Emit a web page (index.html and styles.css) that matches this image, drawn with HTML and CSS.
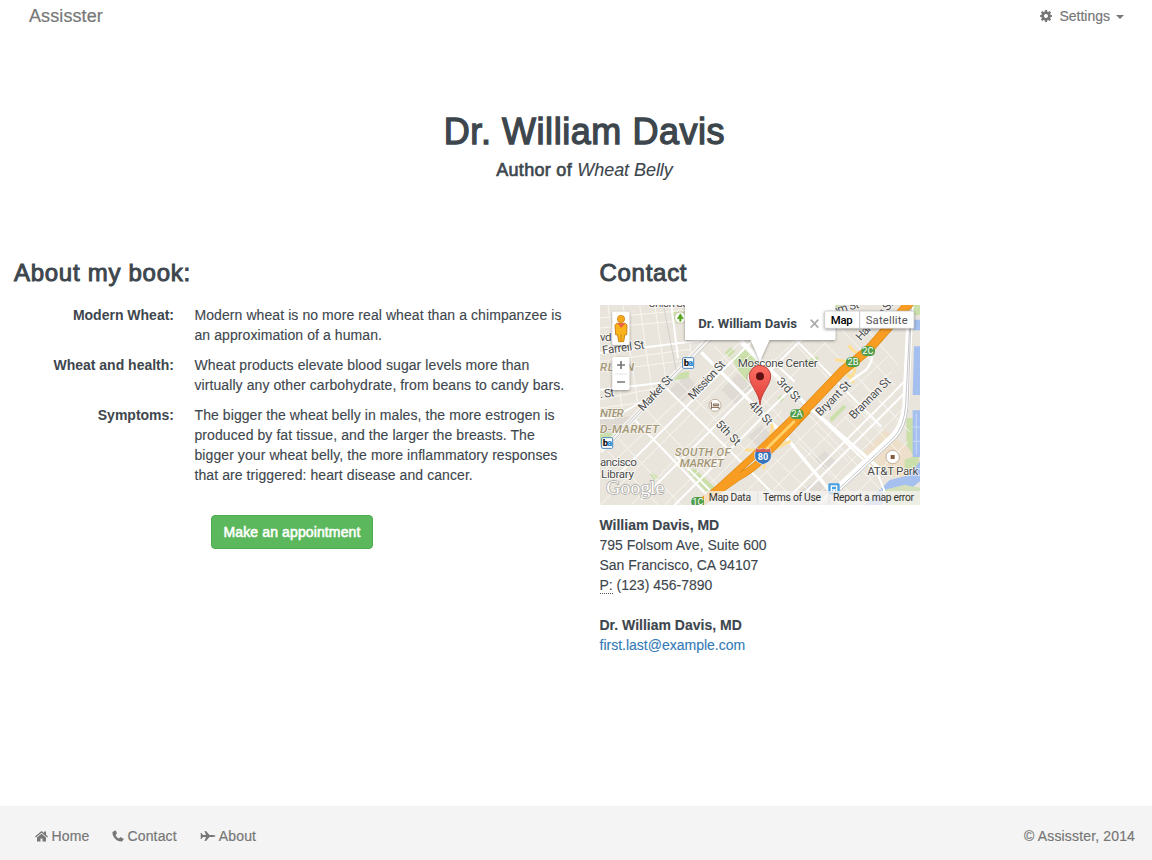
FILE: index.html
```html
<!DOCTYPE html>
<html lang="en">
<head>
<meta charset="utf-8">
<title>Assisster</title>
<link rel="stylesheet" href="styles.css">
</head>
<body>
<nav class="navbar">
  <a class="brand">Assisster</a>
  <a class="settings">
    <svg class="gear" viewBox="0 0 24 24"><path fill-rule="evenodd" d="M10 0h4l.6 3.300 1.900.8 2.800-1.900 2.800 2.800-1.900 2.800.8 1.900 3 .600v3.400l-3 .600-.8 1.900 1.900 2.800-2.800 2.800-2.800-1.900-1.900.8L14 24h-4l-.6-3.300-1.900-.8-2.800 1.900L1.900 19l1.900-2.800L3 14.300 0 13.700v-3.400l3-.6.8-1.900L1.900 5l2.800-2.800 2.800 1.900 1.900-.8zM12 8a4 4 0 1 0 0 8 4 4 0 0 0 0-8z"/></svg>
    <span>Settings</span><i class="caret"></i>
  </a>
</nav>
<header class="hero">
  <h1>Dr. William Davis</h1>
  <p class="subtitle">Author of <em>Wheat Belly</em></p>
</header>
<main class="columns">
  <section class="book">
    <h2>About my book:</h2>
    <dl class="facts">
      <dt>Modern Wheat:</dt>
      <dd>Modern wheat is no more real wheat than a chimpanzee is<br>an approximation of a human.</dd>
      <dt>Wheat and health:</dt>
      <dd>Wheat products elevate blood sugar levels more than<br>virtually any other carbohydrate, from beans to candy bars.</dd>
      <dt>Symptoms:</dt>
      <dd>The bigger the wheat belly in males, the more estrogen is<br>produced by fat tissue, and the larger the breasts. The<br>bigger your wheat belly, the more inflammatory responses<br>that are triggered: heart disease and cancer.</dd>
    </dl>
    <button class="appointment">Make an appointment</button>
  </section>
  <section class="contact">
    <h2>Contact</h2>
    <svg class="map" viewBox="6 6 960 600">
      <defs>
        <filter id="shade" x="-20%" y="-20%" width="140%" height="150%"><feDropShadow dx="0" dy="3" stdDeviation="4" flood-opacity=".4"/></filter>
        <linearGradient id="pin" x1="0" y1="0" x2="0" y2="1"><stop offset="0" stop-color="#fb7064"/><stop offset="1" stop-color="#de3b34"/></linearGradient>
      </defs>
      <rect x="6" y="6" width="960" height="600" fill="#e9e5dc"/>
      <!-- blocks and parks -->
      <path d="M370 260l50-50 45 45-50 50zM210 265l55-50 35 35-50 50zM6 350l90-10-60 70H6zM450 400l40-35 30 30-40 35zM650 470l30-25 35 30-35 30zM610 560l50-30 40 50-30 30h-60z" fill="#dfdad3"/>
      <path d="M790 455l70-75 70 55 40 40v50l-90-5-90-40z" fill="#eddfc9"/>
      <path d="M400 165l40-30 50 50-50 50zM380 150l18-18 14 14-18 16zM538 285l12-8 8 12-10 8zM213 218l60-14v20l-55 10zM270 505l20-8 70 65-20 22zM695 345l42-40 8 8-44 45zM6 390h48l-15 22-33 10zM155 515l16 18 12-10-22-14zM225 25h35v36h-35zM690 6h45l-25 20zM620 170l40-10v18l-30 14zM935 6h31v30h-20zM925 345h20v110l-20-30zM920 470l42-15v45h-42z" fill="#cadfaa"/>
      <path d="M948 130h18v146h-22zM944 322h22v140h-22zM948 50h18v32h-20zM966 475v60l-90 71H800l75-75 60-15z" fill="#a5c0ef"/>
      <path d="M955 330v125M944 372h22M944 415h22" stroke="#c9d9f5" stroke-width="3"/>
      <path d="M860 560l60-15 46 10v51H865z" fill="#d3e0bb"/>
      <!-- minor streets -->
      <g stroke="#f8f6f1" stroke-width="3" fill="none">
        <path d="M6 45l390-35M6 75l330-30M6 175l270-36M6 205l250-32M6 290l170-35M6 315l150-20M30 6l45 330M75 6l45 300M125 6l40 280M170 6l35 230M262 6l20 170M315 6l15 115M360 6l8 80"/>
        <path d="M30 445l150 161M60 406l190 200M145 320l270 286M235 230l370 376M350 130l440 476M395 88l470 490M480 6l430 450M570 6l365 380M660 6l230 240M740 6l160 180"/>
        <path d="M6 515l450-425M6 606l570-570M100 606l230-240 340-330M200 606l410-415 170-170M340 540l210-215M430 580l200-195 240-225M480 606l400-400M630 606l300-305M740 606l190-190M800 250l95 95M760 290l95 95M740 340l90 90M600 420l100 100M650 380l100 95M530 465l110 105M660 6l-55 55"/>
      </g>
      <!-- main streets -->
      <g stroke="#fff" stroke-width="6" fill="none">
        <path d="M6 150l360-45M220 6l20 160M6 260l180-20M6 345l40 0 130-75M105 345l250 261M205 255l355 351M395 75l230 230 213 205 20 50v46M520 170l70 66M490 6l360 365"/>
        <path stroke-width="10" d="M310 148l250 250 170 208M430 120l195 185 235 205"/>
        <path d="M70 506l350-350L575 6M130 590l350-350L700 20M230 606l300-300 50-50M550 606l325-325 60-62M590 600l330-330M380 606l-150-150"/>
      </g>
      <!-- Market Street and its rail track -->
      <path d="M6 445l90-88 245-260 85-91" stroke="#f6f5f2" stroke-width="17" fill="none"/>
      <path d="M16 430l80-78 240-252 85-94M22 438l325-335 90-97" stroke="#c9c9cb" stroke-width="3" fill="none"/>
      <path d="M196 6l38 195M440 25l40-30" stroke="#c4c4c4" stroke-width="2" fill="none"/>
      <path d="M665 606l220-205q32-35 38-95l14-300" stroke="#fff" stroke-width="20" fill="none"/>
      <path d="M670 606l215-200q34-35 38-100l15-300M680 606l215-200q30-34 35-95l10-305" stroke="#c6c6c8" stroke-width="3" fill="none"/>
      <!-- freeway and ramps -->
      <g fill="none" stroke="#ffdf94" stroke-width="9" stroke-linecap="round">
        <path d="M445 441h80l50-25M522 365q5 35-30 65M498 440v55M715 170l55 10M755 130q15 25 40 20M770 195q0 30-22 23M745 207l20 30M540 430l35-14"/>
      </g>
      <path d="M810 145q25 15-5 55l-50 35" fill="none" stroke="#fff" stroke-width="7"/>
      <path d="M300 606l55-45 115-105 130-126M310 600l112-78q60-34 95-80L630 322" fill="none" stroke="#dc8b17" stroke-width="21"/>
      <path d="M300 606l55-45 115-105 130-126M310 600l112-78q60-34 95-80L630 322" fill="none" stroke="#f99d22" stroke-width="17"/>
      <path d="M590 354L735 202 812 140 936 -2" fill="none" stroke="#dc8b17" stroke-width="28"/>
      <path d="M590 354L735 202 812 140 936 -2" fill="none" stroke="#f99d22" stroke-width="24"/>
      <path d="M505 438L590 354" stroke="#ffd369" stroke-width="8"/>
      <!-- highway badges -->
      <g class="exit"><rect x="577" y="319" width="40" height="29" rx="13"/><text x="597" y="343">2A</text><rect x="744" y="163" width="41" height="29" rx="13"/><text x="765" y="187">2B</text><rect x="790" y="130" width="41" height="29" rx="13"/><text x="810" y="154">2C</text><rect x="280" y="582" width="39" height="29" rx="13"/><text x="300" y="606">1C</text></g>
      <path d="M474 436q10 7 21 0 11 7 21 0l4 18q3 22-25 31-28-9-25-31z" fill="#3775bd" stroke="#fff" stroke-width="2"/><path d="M474 436q10 7 21 0 11 7 21 0l2 11h-46z" fill="#d65b55"/>
      <text class="shield" x="495" y="471">80</text>
      <!-- place markers -->
      <circle cx="247" cy="44" r="17" fill="#fff" stroke="#bcae9b" stroke-width="2"/><path d="M247 32l9 15h-7v8h-4v-8h-7z" fill="#57a51d" stroke="#57a51d" stroke-width="2"/>
      <g fill="#fff" stroke="#a58f78" stroke-width="2"><circle cx="351" cy="307" r="18"/><circle cx="884" cy="462" r="20"/><circle cx="464" cy="224" r="17"/></g>
      <path d="M340 297v21M340 313h23v5M346 308h16v-5h-16z" fill="none" stroke="#795d46" stroke-width="3"/><path d="M878 456h12v12h-12z" fill="#805a3d"/>
      <g class="bart"><rect x="254" y="164" width="33" height="32" rx="3"/><text x="257" y="190">b<tspan>a</tspan></text><rect x="11" y="404" width="33" height="32" rx="3"/><text x="14" y="430">b<tspan>a</tspan></text></g>
      <path d="M442 6h34v5h-34z" fill="#3d82c4"/>
      <rect x="691" y="541" width="34" height="34" rx="4" fill="#48a1e4"/><path d="M698 547h20v20h-20z" fill="#fff"/><path d="M702 551h12v8h-12zM702 562h3v3h-3zM711 562h3v3h-3z" fill="#48a1e4"/>
      <!-- labels -->
      <g class="label">
        <text x="151" y="12" textLength="180">Union Square</text>
        <text x="6" y="115" textLength="35">vd</text>
        <text transform="translate(14 154) rotate(-8)" textLength="128">Farrell St</text>
        <text transform="translate(7 286) rotate(-8)" textLength="43">. St</text>
        <text transform="translate(135 326) rotate(-47)" textLength="132">Market St</text>
        <text transform="translate(285 292) rotate(-47)" textLength="145">Mission St</text>
        <text x="419" y="192" textLength="240">Moscone Center</text>
        <text transform="translate(534 237) rotate(46)" textLength="87">3rd St</text>
        <text transform="translate(450 307) rotate(46)" textLength="86">4th St</text>
        <text transform="translate(351 365) rotate(46)" textLength="90">5th St</text>
        <text transform="translate(667 341) rotate(-45)" textLength="132">Bryant St</text>
        <text transform="translate(767 350) rotate(-45)" textLength="160">Brannan St</text>
        <text transform="translate(788 115) rotate(-48)" textLength="150">Harrison St</text>
        <text transform="translate(704 36) rotate(-15)" textLength="84">om St</text>
        <text x="6" y="488" textLength="111">ancisco</text><text x="9" y="524" textLength="99">Library</text>
        <text x="808" y="517" textLength="153">AT&amp;T Park</text>
      </g>
      <g class="district">
        <text x="6" y="203" textLength="102">RLOIN</text><text x="6" y="341" textLength="71">NTER</text><text x="6" y="389" textLength="177">D-MARKET</text><text x="230" y="458" textLength="168">SOUTH OF</text><text x="245" y="492" textLength="133">MARKET</text>
      </g>
      <text class="google" x="25" y="573" textLength="174" lengthAdjust="spacingAndGlyphs">Google</text>
      <!-- attribution strip -->
      <path d="M318 564h648v42H318z" fill="#f5f4f1" fill-opacity=".78"/><path d="M479 565v40M693 565v40" stroke="#ddd" stroke-width="2"/>
      <g class="legal"><text x="332" y="594" textLength="127">Map Data</text><text x="495" y="594" textLength="174">Terms of Use</text><text x="705" y="594" textLength="243">Report a map error</text></g>
      <!-- pegman and zoom -->
      <g filter="url(#shade)" fill="#fff"><rect x="43" y="26" width="51" height="100" rx="5"/><rect x="43" y="162" width="51" height="99" rx="5"/></g>
      <path d="M56 61h26l5 5-1 29-6 1-3 20H62l-3-20-6-1-2-28z" fill="#f9b31c" stroke="#cd8411" stroke-width="3"/><path d="M58 61h24L70 75z" fill="#ed6047"/><path d="M69 94v21" stroke="#b87812" stroke-width="2"/><circle cx="69" cy="48" r="11" fill="#f6a91b" stroke="#c98012" stroke-width="2"/>
      <path d="M49 213h40" stroke="#d8d8d8" stroke-width="2"/><path d="M57 186h24M69 174v24M57 237h24" stroke="#777" stroke-width="5"/>
      <!-- marker -->
      <path d="M486 306C484 268 454 248 454 219a32 32 0 0 1 64 0c0 29-30 49-32 87z" fill="url(#pin)" stroke="#b53630" stroke-width="2.500"/><circle cx="486" cy="220" r="12" fill="#5e1110"/>
      <!-- info bubble -->
      <path filter="url(#shade)" d="M261 6h451v101q0 4-4 4H514l-28 62-28-62H265q-4 0-4-4z" fill="#fff"/>
      <text class="person" x="301" y="74" textLength="296" lengthAdjust="spacingAndGlyphs">Dr. William Davis</text>
      <path d="M638 50l23 24M661 50l-23 24" stroke="#aaa" stroke-width="5"/>
      <!-- map type -->
      <rect filter="url(#shade)" x="680" y="24" width="268" height="52" rx="3" fill="#fff" stroke="#bbb" stroke-width="2"/><path d="M785 25v50" stroke="#aaa" stroke-width="2"/>
      <text class="type active" x="698" y="63" textLength="66">Map</text><text class="type" x="803" y="63" textLength="126">Satellite</text>
    </svg>
    <address>
      <strong>William Davis, MD</strong><br>795 Folsom Ave, Suite 600<br>San Francisco, CA 94107<br><abbr>P:</abbr> (123) 456-7890
    </address>
    <address>
      <strong>Dr. William Davis, MD</strong><br><a class="email">first.last@example.com</a>
    </address>
  </section>
</main>
<footer class="footer">
  <div class="links">
    <a><svg class="home" viewBox="0 0 26 24"><path d="M13 2L0 13l1.700 2L13 5.500 24.300 15l1.700-2-4-3.500V3h-4v3.200zM13 7.500L4 15v8h7v-6h4v6h7v-8z"/></svg>Home</a>
    <a><svg class="phone" viewBox="0 0 24 24"><path d="M6 1L1 4C0 14 10 24 20 23l3-4c1-1 0-2-1-2l-5-3-3 3c-3-1-6-4-7-7l3-3-2-5C7.500 1 7 .5 6 1z"/></svg>Contact</a>
    <a><svg class="plane" viewBox="0 0 32 24"><path d="M31 12c0 1.500-4 2-8 2h-4l-7 8H9l3-8H6l-3 4H1l1-5-2-1 2-1-1-5h2l3 4h6L9 2h3l7 8h4c4 0 8 .5 8 2z"/></svg>About</a>
  </div>
  <span class="copyright">© Assisster, 2014</span>
</footer>
</body>
</html>
```
FILE: styles.css
```css
* { box-sizing: border-box; }
body {
  margin: 0;
  height: 860px;
  display: flex;
  flex-direction: column;
  overflow: hidden;
  background: #fff;
  color: #3d464d;
  font: 14px/20px "Liberation Sans", Arial, sans-serif;
}
h1, h2, p, dl, dd { margin: 0; }

.navbar {
  display: flex;
  justify-content: space-between;
  height: 32px;
  padding: 0 28px 0 29px;
  align-items: center;
  color: #777;
}
.brand { font-size: 18px; letter-spacing: .1px; -webkit-text-stroke: .2px #777; }
.settings { display: flex; align-items: center; -webkit-text-stroke: .2px #777; }
.gear { width: 12px; height: 12px; margin-right: 7px; fill: #777; overflow: visible; }
.caret { margin-left: 6px; border: 4px solid transparent; border-top-color: #777; border-bottom: 0; margin-top: 2px; }

.hero { margin-top: 80px; padding-left: 17px; text-align: center; }
h1 { font-size: 36px; line-height: 40px; font-weight: 400; letter-spacing: .55px; -webkit-text-stroke: 1.3px #3d464d; }
.subtitle { font-size: 18px; line-height: 20px; margin-top: 8px; letter-spacing: .3px; -webkit-text-stroke: .65px #3d464d; }
.subtitle em { -webkit-text-stroke: .1px #3d464d; letter-spacing: -.05px; }

.columns { display: flex; flex: 1; padding: 79px 0 0 14px; }
.book { width: 585.5px; }
h2 { font-size: 24px; line-height: 28px; margin-bottom: 18px; font-weight: 400; letter-spacing: .72px; -webkit-text-stroke: .95px #3d464d; }
.facts { display: grid; grid-template-columns: 160px 1fr; column-gap: 20.5px; row-gap: 10px; }
.facts dt { text-align: right; font-weight: 700; }
.facts dd { white-space: nowrap; letter-spacing: .08px; -webkit-text-stroke: .12px #3d464d; }
.appointment {
  display: block;
  width: 162px;
  height: 34px;
  margin: 30px 0 0 197px;
  padding: 0;
  border: 1px solid #4cae4c;
  border-radius: 4px;
  background: #5cb85c;
  color: #fff;
  font: 14px/20px "Liberation Sans", Arial, sans-serif;
  letter-spacing: .12px;
  -webkit-text-stroke: .55px #fff;
}
.contact { width: 320px; }
.map { display: block; width: 320px; height: 200px; margin-bottom: 10px; font-family: Roboto, sans-serif; }
.label text { font-size: 35px; fill: #4b4b4b; stroke: #fff; stroke-width: 5px; stroke-opacity: .75; paint-order: stroke; }
.district text { font-size: 35px; font-style: italic; font-weight: 500; fill: #a39779; stroke: #f6f3eb; stroke-width: 4px; paint-order: stroke; }
.exit rect { fill: #4f9d48; }
.exit text { font-size: 28px; fill: #fff; text-anchor: middle; }
.shield { font-size: 27px; font-weight: 700; fill: #fff; text-anchor: middle; }
.bart rect { fill: #fff; stroke: #4786c1; stroke-width: 3px; }
.bart text { font-size: 29px; font-weight: 900; fill: #111; letter-spacing: -3px; }
.bart tspan { fill: #2d86cc; }
.google { font: 54px "Liberation Serif", serif; fill: #fff; stroke: #a9a7a3; stroke-width: 4px; paint-order: stroke; }
.legal text { font-size: 31px; fill: #333; }
.person { font-size: 38px; font-weight: 700; fill: #3d464d; }
.type { font-size: 34px; fill: #555; }
.type.active { font-weight: 500; fill: #000; }
address { margin-bottom: 20px; font-style: normal; white-space: nowrap; -webkit-text-stroke: .12px; }
abbr { border-bottom: 1px dotted #555; }
.email { color: #337ab7; }

.footer {
  display: flex;
  justify-content: space-between;
  align-items: flex-start;
  height: 54px;
  padding: 20px 17px 0 35px;
  background: #f4f4f4;
  color: #777;
  letter-spacing: .15px;
  -webkit-text-stroke: .2px #777;
}
.links { display: flex; gap: 23px; }
.links a { display: flex; align-items: center; }
.links svg { fill: #777; height: 12px; flex: none; }
.home { width: 13px; margin-right: 3.5px; }
.phone { width: 12px; margin-right: 3px; }
.plane { width: 16px; margin-right: 3px; }
```
